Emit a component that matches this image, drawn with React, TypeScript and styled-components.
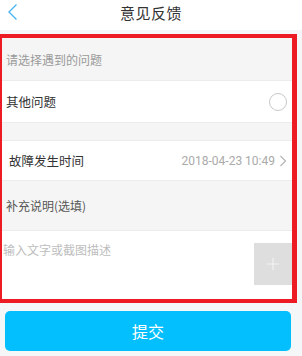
import React from "react";
import styled, { createGlobalStyle } from "styled-components";

const Global = createGlobalStyle`
  html, body { margin: 0; padding: 0; }
  body {
    background: #f5f6f7;
    font-family: "Noto Sans CJK SC", "Noto Sans", sans-serif;
    width: 302px;
    height: 356px;
    overflow: hidden;
  }
`;

const Page = styled.div`
  display: flex;
  flex-direction: column;
  width: 302px;
  height: 356px;
`;

const Header = styled.div`
  position: relative;
  height: 30px;
  background: #fff;
  display: flex;
  align-items: center;
  justify-content: center;
  flex-shrink: 0;
`;

const Back = styled.svg`
  position: absolute;
  left: 7px;
  top: 3px;
`;

const Title = styled.div`
  font-size: 15px;
  color: #333;
  letter-spacing: 0.5px;
  margin-top: -6px;
`;

const Frame = styled.div`
  margin-top: 4px;
  width: 290px;
  border: 4px solid #ec1b24;
  border-left-width: 2px;
  border-right-width: 5px;
  box-sizing: content-box;
  display: flex;
  flex-direction: column;
`;

const SectionLabel = styled.div<{ $h: number; $dark?: boolean }>`
  height: ${(p) => p.$h}px;
  background: #f5f5f5;
  display: flex;
  align-items: center;
  padding-left: 4px;
  font-size: 12px;
  color: ${(p) => (p.$dark ? "#555" : "#9a9a9a")};
  box-sizing: border-box;
`;

const Row = styled.div<{ $h: number; $indent?: number }>`
  height: ${(p) => p.$h}px;
  background: #fff;
  display: flex;
  align-items: center;
  justify-content: space-between;
  padding-left: ${(p) => p.$indent ?? 4}px;
  padding-right: 5px;
  font-size: 12.5px;
  color: #333;
  box-sizing: border-box;
  border-top: 1px solid #ececec;
  border-bottom: 1px solid #ececec;
`;

const Radio = styled.div`
  width: 16px;
  height: 16px;
  border: 1px solid #c8c8c8;
  border-radius: 50%;
  margin-right: 0px;
`;

const Gap = styled.div`
  height: 17px;
  background: #f5f5f5;
`;

const Value = styled.div`
  display: flex;
  align-items: center;
  gap: 4px;
  font-family: Roboto, "Noto Sans", sans-serif;
  font-size: 12px;
  color: #aaa;
`;

const TextArea = styled.div`
  height: 69px;
  background: #fff;
  display: flex;
  justify-content: space-between;
  box-sizing: border-box;
  border-top: 1px solid #ececec;
`;

const Placeholder = styled.div`
  font-size: 12px;
  color: #bdbdbd;
  padding: 10px 0 0 1px;
`;

const AddBox = styled.div`
  width: 38px;
  height: 42px;
  margin-top: 12px;
  background: #dedede;
  display: flex;
  align-items: center;
  justify-content: center;
`;

const Submit = styled.button`
  margin: 8px 0 0 5px;
  width: 286px;
  height: 40px;
  border: none;
  border-radius: 5px;
  background: #03bffd;
  color: #fff;
  font-family: "Noto Sans CJK SC", sans-serif;
  font-size: 16px;
  padding: 0;
`;

export default function App() {
  return (
    <Page>
      <Global />
      <Header>
        <Back width="12" height="18" viewBox="0 0 12 18">
          <path d="M9.5 1.5 L2 9 L9.5 16.5" fill="none" stroke="#4cb6f2" strokeWidth="1.4" />
        </Back>
        <Title>意见反馈</Title>
      </Header>
      <Frame>
        <SectionLabel $h={42}>请选择遇到的问题</SectionLabel>
        <Row $h={43}>
          <span>其他问题</span>
          <Radio />
        </Row>
        <Gap />
        <Row $h={41} $indent={7}>
          <span>故障发生时间</span>
          <Value>
            2018-04-23 10:49
            <svg width="8" height="12" viewBox="0 0 8 12">
              <path d="M1.5 1 L6.5 6 L1.5 11" fill="none" stroke="#b5b5b5" strokeWidth="1.2" />
            </svg>
          </Value>
        </Row>
        <SectionLabel $h={49} $dark>补充说明(选填)</SectionLabel>
        <TextArea>
          <Placeholder>输入文字或截图描述</Placeholder>
          <AddBox>
            <svg width="12" height="12" viewBox="0 0 12 12">
              <path d="M6 0 V12 M0 6 H12" stroke="#f2f2f2" strokeWidth="1.2" />
            </svg>
          </AddBox>
        </TextArea>
      </Frame>
      <Submit>提交</Submit>
    </Page>
  );
}
